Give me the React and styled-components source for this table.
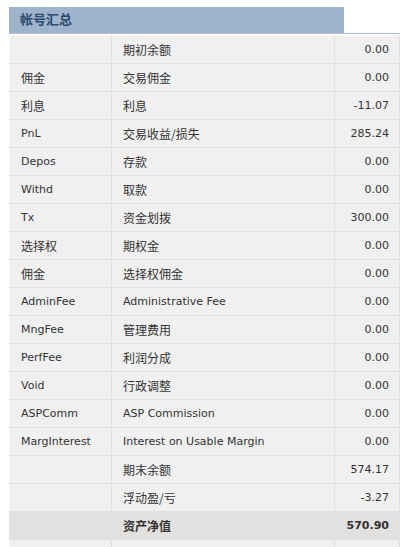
import styled, { createGlobalStyle } from "styled-components";

const GlobalStyle = createGlobalStyle`
  body {
    margin: 0;
    background: #fff;
    font-family: "DejaVu Sans", "Noto Sans CJK SC", sans-serif;
    font-size: 11px;
    color: #333;
  }
`;

const rows = [
  ["", "期初余额", "0.00"],
  ["佣金", "交易佣金", "0.00"],
  ["利息", "利息", "-11.07"],
  ["PnL", "交易收益/损失", "285.24"],
  ["Depos", "存款", "0.00"],
  ["Withd", "取款", "0.00"],
  ["Tx", "资金划拨", "300.00"],
  ["选择权", "期权金", "0.00"],
  ["佣金", "选择权佣金", "0.00"],
  ["AdminFee", "Administrative Fee", "0.00"],
  ["MngFee", "管理费用", "0.00"],
  ["PerfFee", "利润分成", "0.00"],
  ["Void", "行政调整", "0.00"],
  ["ASPComm", "ASP Commission", "0.00"],
  ["MargInterest", "Interest on Usable Margin", "0.00"],
  ["", "期末余额", "574.17"],
  ["", "浮动盈/亏", "-3.27"],
  ["", "资产净值", "570.90", true],
  ["", "可用保证金", "570.90"],
];

const isZh = (s) => /[\u4e00-\u9fff]/.test(s);

function Text({ children }) {
  return isZh(children) ? <Zh>{children}</Zh> : children;
}

export default function App() {
  return (
    <Wrapper>
      <GlobalStyle />
      <HeaderLine>
        <Header>帐号汇总</Header>
      </HeaderLine>
      <Table>
        <colgroup>
          <col style={{ width: 102 }} />
          <col style={{ width: 223 }} />
          <col />
        </colgroup>
        <tbody>
          {rows.map(([code, label, value, total], i) => (
            <Row key={"row" + i} $total={total}>
              <Cell $total={total}>
                <Text>{code}</Text>
              </Cell>
              <Cell $total={total}>
                <Text>{label}</Text>
              </Cell>
              <Amount $total={total}>{value}</Amount>
            </Row>
          ))}
        </tbody>
      </Table>
    </Wrapper>
  );
}

const Wrapper = styled.div`
  padding: 7px 11px 0 9px;
`;

const HeaderLine = styled.div`
  border-bottom: 1px solid #aebfd3;
  margin-bottom: 1px;
`;

const Header = styled.div`
  width: 324px;
  height: 26px;
  line-height: 24px;
  padding-left: 11px;
  background-color: #9fb3cc;
  color: #2b4a70;
  font-family: "Noto Sans CJK SC", sans-serif;
  font-size: 13px;
  font-weight: 700;
`;

const Zh = styled.span`
  font-family: "Noto Sans CJK SC", sans-serif;
  font-size: 12px;
`;

const Table = styled.table`
  width: 391px;
  border-collapse: collapse;
  table-layout: fixed;
`;

const Row = styled.tr`
  height: 28px;
  background-color: ${(p) => (p.$total ? "#e3e1df" : "#f0f0f0")};
`;

const Cell = styled.td`
  padding: 0 10px 0 11px;
  border-top: 1px solid #fafafa;
  border-bottom: 1px solid #e0e0e0;
  border-left: 1px solid ${(p) => (p.$total ? "#e3e1df" : "#fafafa")};
  border-right: 1px solid ${(p) => (p.$total ? "#e3e1df" : "#e0e0e0")};
  white-space: nowrap;
  overflow: hidden;
  vertical-align: middle;
  font-weight: ${(p) => (p.$total ? 700 : 400)};
`;

const Amount = styled(Cell)`
  text-align: right;
`;
